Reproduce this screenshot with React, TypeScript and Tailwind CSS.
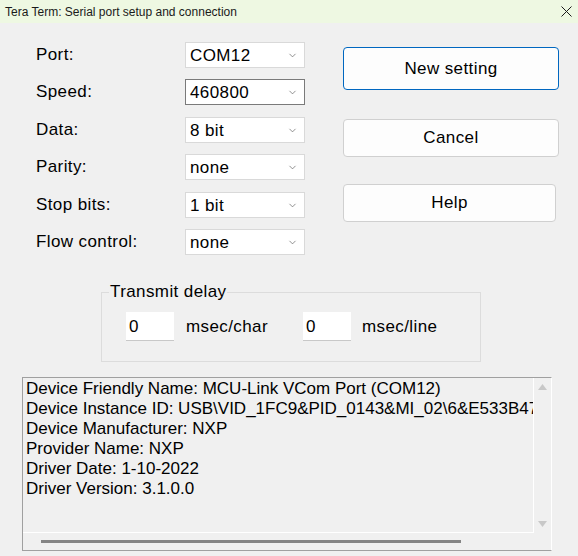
import { ChevronDown } from 'lucide-react';

const rows = [
  { label: 'Port:', value: 'COM12', top: 'mt-[19px]', focused: false },
  { label: 'Speed:', value: '460800', top: 'mt-[11px]', focused: true },
  { label: 'Data:', value: '8 bit', top: 'mt-[12px]', focused: false },
  { label: 'Parity:', value: 'none', top: 'mt-[11px]', focused: false },
  { label: 'Stop bits:', value: '1 bit', top: 'mt-[12px]', focused: false },
  { label: 'Flow control:', value: 'none', top: 'mt-[11px]', focused: false },
];

const info = [
  'Device Friendly Name: MCU-Link VCom Port (COM12)',
  'Device Instance ID: USB\\VID_1FC9&PID_0143&MI_02\\6&E533B47A&0&0002',
  'Device Manufacturer: NXP',
  'Provider Name: NXP',
  'Driver Date: 1-10-2022',
  'Driver Version: 3.1.0.0',
];

function Select({ value, focused }: { value: string; focused: boolean }) {
  return (
    <div
      className={`flex h-[26px] w-[120px] items-center justify-between bg-white pl-[4px] pr-[6px] border ${
        focused ? 'border-[#7a7a7a]' : 'border-[#d9d9d9]'
      }`}
    >
      <span className="leading-none">{value}</span>
      <ChevronDown size={11} strokeWidth={1.5} className="text-[#606060]" />
    </div>
  );
}

export default function App() {
  return (
    <div className="w-[578px] h-[556px] bg-[#f0f0f0] overflow-hidden text-black font-['Liberation_Sans',Arial,sans-serif] text-[17px] tracking-[0.4px]">
      <div className="flex h-[23px] items-center justify-between bg-[#eef8e2] pl-[5px] pr-[6px]">
        <span className="text-[12px] tracking-normal text-[#1a1a1a]">
          Tera Term: Serial port setup and connection
        </span>
        <svg width="11" height="11" viewBox="0 0 11 11">
          <path d="M0.5 0.5 L10.5 10.5 M10.5 0.5 L0.5 10.5" stroke="#1a1a1a" strokeWidth="1" />
        </svg>
      </div>

      <div className="flex">
        <div className="ml-[36px] flex flex-col">
          {rows.map((r) => (
            <div key={r.label} className={`flex items-center ${r.top}`}>
              <span className="w-[149px]">{r.label}</span>
              <Select value={r.value} focused={r.focused} />
            </div>
          ))}
        </div>

        <div className="ml-[38px] flex flex-col">
          <button className="mt-[24px] h-[43px] w-[216px] rounded-[4px] border border-[#0067c0] bg-[#fdfdfd]">
            New setting
          </button>
          <button className="mt-[29px] h-[38px] w-[216px] rounded-[4px] border border-[#d0d0d0] bg-[#fdfdfd]">
            Cancel
          </button>
          <button className="mt-[27px] h-[38px] w-[213px] rounded-[4px] border border-[#d0d0d0] bg-[#fdfdfd]">
            Help
          </button>
        </div>
      </div>

      <fieldset className="ml-[101px] mt-[28px] w-[380px] h-[79px] border border-[#dcdcdc] pl-[24px] pt-[11px]">
        <legend className="ml-[-17px] px-[1px] leading-[18px]">Transmit delay</legend>
        <div className="flex items-center">
          <div className="h-[29px] w-[48px] bg-white border-b border-[#c8c8c8] pl-[3px] pt-[2px]">0</div>
          <span className="ml-[12px] w-[117px]">msec/char</span>
          <div className="h-[29px] w-[48px] bg-white border-b border-[#c8c8c8] pl-[3px] pt-[2px]">0</div>
          <span className="ml-[11px]">msec/line</span>
        </div>
      </fieldset>

      <div className="ml-[22px] mt-[15px] w-[530px] h-[174px] border-t border-l border-[#a0a0a0] border-r border-r-white border-b border-b-[#a0a0a0] flex flex-col tracking-normal">
        <div className="flex flex-1 min-h-0">
          <div className="flex-1 min-w-0 overflow-hidden border-r border-b border-white pl-[3px] pt-[1px]">
            {info.map((l) => (
              <div key={l} className="whitespace-nowrap leading-[20px]">{l}</div>
            ))}
          </div>
          <div className="w-[17px] flex flex-col items-center justify-between py-[6px]">
            <svg width="9" height="6" viewBox="0 0 9 6"><path d="M4.5 0 L9 6 L0 6 Z" fill="#c8c8c8" /></svg>
            <svg width="9" height="6" viewBox="0 0 9 6"><path d="M0 0 L9 0 L4.5 6 Z" fill="#c8c8c8" /></svg>
          </div>
        </div>
        <div className="h-[17px] flex items-center">
          <div className="ml-[18px] h-[3px] w-[420px] bg-[#858585]" />
        </div>
      </div>
    </div>
  );
}
